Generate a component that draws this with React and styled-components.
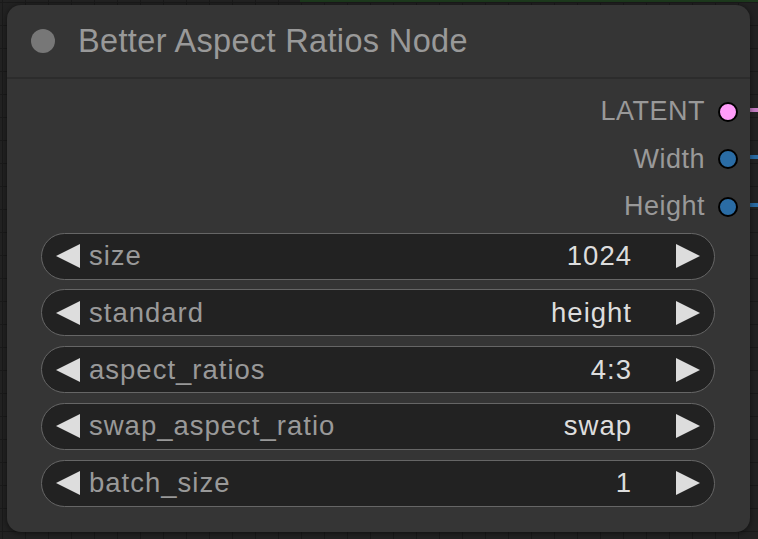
import React from 'react';
import styled, { createGlobalStyle } from 'styled-components';

const GlobalStyle = createGlobalStyle`
  html, body {
    margin: 0;
    padding: 0;
    width: 758px;
    height: 539px;
    overflow: hidden;
    background-color: #222;
    background-image:
      linear-gradient(to right, #1a1a1a 1px, transparent 1px),
      linear-gradient(to bottom, #1a1a1a 1px, transparent 1px);
    background-size: 23px 23px;
    background-position: 2px 2px;
    font-family: "Liberation Sans", Arial, sans-serif;
  }
`;

const Canvas = styled.div`
  position: relative;
  width: 758px;
  height: 539px;
  padding: 5px 0 0 7px;
  box-sizing: border-box;
`;

const Link = styled.div`
  position: absolute;
  left: ${p => p.x}px;
  top: ${p => p.y}px;
  width: ${p => p.w}px;
  height: ${p => p.h}px;
  background: ${p => p.color};
`;

const Node = styled.div`
  position: relative;
  z-index: 1;
  width: 743px;
  height: 527px;
  background: #353535;
  border-radius: 14px;
  box-shadow: 0 1px 6px rgba(0, 0, 0, 0.55);
  display: flex;
  flex-direction: column;
`;

const Title = styled.div`
  height: 72px;
  display: flex;
  align-items: center;
  gap: 23px;
  padding-left: 24px;
  border-bottom: 2px solid #2c2c2c;
  color: #999;
  font-size: 32.5px;
  letter-spacing: 0.35px;
  flex-shrink: 0;
`;

const TitleDot = styled.span`
  width: 24px;
  height: 24px;
  border-radius: 50%;
  background: #777;
`;

const Outputs = styled.div`
  display: flex;
  flex-direction: column;
  align-items: flex-end;
  padding: 9px 12px 0 0;
`;

const OutputRow = styled.div`
  height: 47.5px;
  display: flex;
  align-items: center;
  gap: 13px;
  color: #999;
  font-size: 27px;
  letter-spacing: 0.5px;
`;

const Slot = styled.span`
  width: 16px;
  height: 16px;
  border-radius: 50%;
  background: ${p => p.color};
  border: 2px solid #000;
`;

const Widgets = styled.div`
  display: flex;
  flex-direction: column;
  gap: 9.75px;
  padding: 2px 35px 0 34px;
`;

const Widget = styled.div`
  height: 47px;
  box-sizing: border-box;
  border: 1.5px solid #666;
  border-radius: 24px;
  background: #222;
  display: flex;
  align-items: center;
  padding: 0 14px;
  font-size: 27.5px;
  letter-spacing: 1px;
`;

const Arrow = styled.span`
  width: 0;
  height: 0;
  border-top: 12px solid transparent;
  border-bottom: 12px solid transparent;
  ${p => (p.dir === 'left'
    ? 'border-right: 24px solid #ddd;'
    : 'border-left: 24px solid #ddd;')}
  flex-shrink: 0;
`;

const Label = styled.span`
  color: #999;
  margin-left: 9px;
  flex: 1;
`;

const Value = styled.span`
  color: #ddd;
  margin-right: 44px;
`;

const outputs = [
  { name: 'LATENT', color: '#ff9cf9' },
  { name: 'Width', color: '#2a6ca5' },
  { name: 'Height', color: '#2a6ca5' },
];

const widgets = [
  { label: 'size', value: '1024' },
  { label: 'standard', value: 'height' },
  { label: 'aspect_ratios', value: '4:3' },
  { label: 'swap_aspect_ratio', value: 'swap' },
  { label: 'batch_size', value: '1' },
];

export default function App() {
  return (
    <>
      <GlobalStyle />
      <Canvas>
        <Link x={300} y={0} w={458} h={2} color="#1d3a1d" />
        <Link x={745} y={108} w={13} h={4} color="#c67fc4" />
        <Link x={745} y={155} w={13} h={4} color="#2a6ca5" />
        <Link x={745} y={203} w={13} h={4} color="#2a6ca5" />
        <Node>
          <Title>
            <TitleDot />
            Better Aspect Ratios Node
          </Title>
          <Outputs>
            {outputs.map(o => (
              <OutputRow key={o.name}>
                {o.name}
                <Slot color={o.color} />
              </OutputRow>
            ))}
          </Outputs>
          <Widgets>
            {widgets.map(w => (
              <Widget key={w.label}>
                <Arrow dir="left" />
                <Label>{w.label}</Label>
                <Value>{w.value}</Value>
                <Arrow dir="right" />
              </Widget>
            ))}
          </Widgets>
        </Node>
      </Canvas>
    </>
  );
}
